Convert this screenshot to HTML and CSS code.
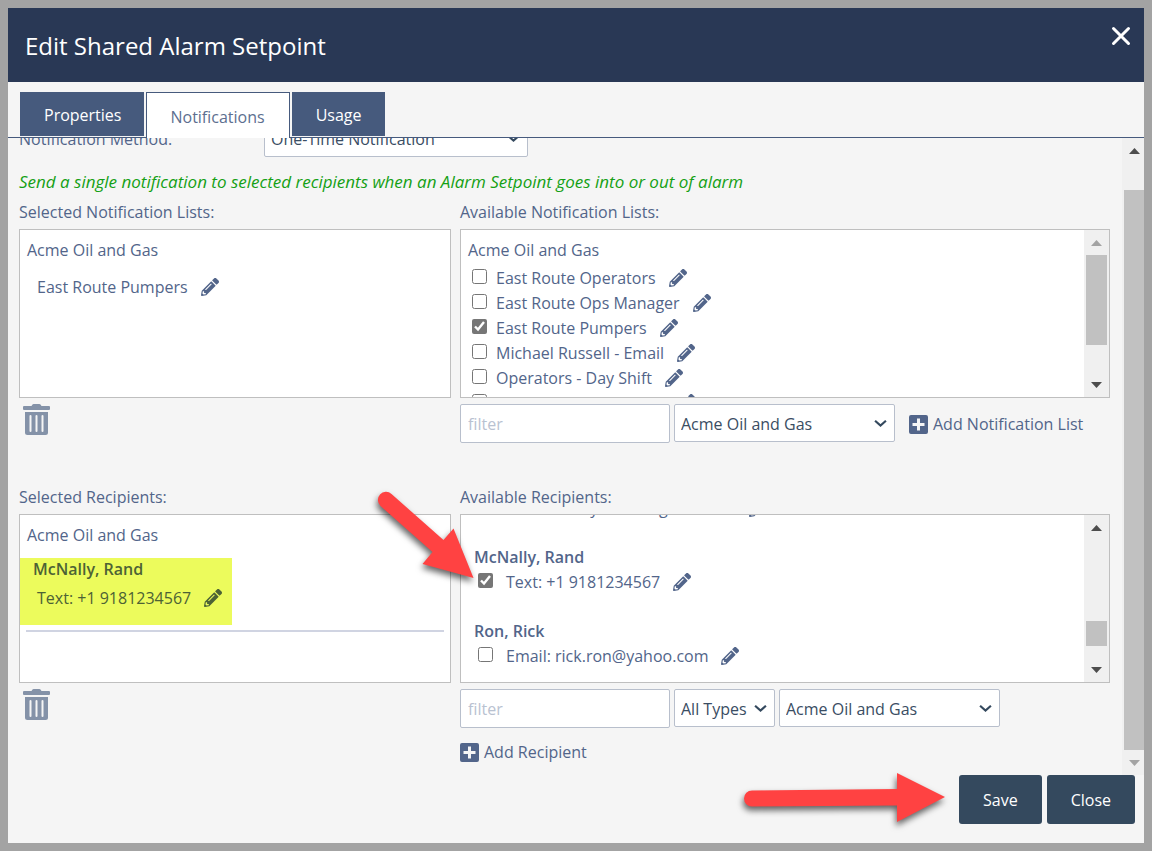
FILE: index.html
```html
<!DOCTYPE html>
<html lang="en">
<head>
<meta charset="utf-8">
<meta name="viewport" content="width=device-width, initial-scale=1">
<title>Edit Shared Alarm Setpoint</title>
<link rel="stylesheet" href="styles.css">
</head>
<body>
<svg class="sprite" aria-hidden="true">
  <symbol id="pencil" viewBox="0 0 512 512"><path d="M497.900 142.100l-46.100 46.100c-4.700 4.700-12.300 4.700-17 0l-111-111c-4.700-4.700-4.700-12.300 0-17l46.100-46.100c18.700-18.700 49.100-18.700 67.900 0l60.100 60.100c18.800 18.700 18.800 49.100 0 67.900zM284.200 99.800L21.600 362.400.400 483.900c-2.900 16.400 11.400 30.600 27.800 27.800l121.500-21.300 262.600-262.600c4.700-4.700 4.700-12.300 0-17l-111-111c-4.800-4.700-12.400-4.700-17.100 0zM124.100 339.900c-5.500-5.500-5.500-14.300 0-19.800l154-154c5.500-5.500 14.300-5.500 19.800 0s5.500 14.300 0 19.800l-154 154c-5.500 5.500-14.300 5.500-19.800 0zM88 424h48v36.300l-64.500 11.300-31.100-31.100L51.800 376H88v48z"/></symbol>
  <symbol id="trash" viewBox="0 0 27 32"><path fill-rule="evenodd" d="M1 2h7.500l.8-1.200Q9.800 0 10.700 0h5.600q.9 0 1.400.8l.8 1.200H26q1 0 1 1v2q0 1-1 1H1Q0 6 0 5V3q0-1 1-1zM2 8h23v20.500q0 2.500-2.500 2.500h-18Q2 31 2 28.500zM6.500 12v15q0 1 1 1t1-1V12q0-1-1-1t-1 1zM12.500 12v15q0 1 1 1t1-1V12q0-1-1-1t-1 1zM18.500 12v15q0 1 1 1t1-1V12q0-1-1-1t-1 1z"/></symbol>
  <symbol id="plus" viewBox="0 0 19 19"><path fill-rule="evenodd" d="M2 0h15q2 0 2 2v15q0 2-2 2H2q-2 0-2-2V2q0-2 2-2zM8 3.500V8H3.500v3H8v4.500h3V11h4.500V8H11V3.500z"/></symbol>
  <symbol id="chevron" viewBox="0 0 12 8"><path d="M1 1.500l5 4.500 5-4.500" fill="none" stroke="currentColor" stroke-width="2"/></symbol>
  <symbol id="up" viewBox="0 0 11 6"><path d="M5.500 0L11 6H0z"/></symbol>
  <symbol id="down" viewBox="0 0 11 6"><path d="M0 0h11L5.500 6z"/></symbol>
</svg>

<main class="dialog" role="dialog" aria-labelledby="title">
  <header class="dialog-header">
    <h1 class="dialog-title" id="title">Edit Shared Alarm Setpoint</h1>
    <button class="close-x" type="button" aria-label="Close dialog">
      <svg width="20" height="20" viewBox="0 0 20 20"><path d="M2.500 2.500l15 15M17.500 2.500l-15 15" fill="none" stroke="#fff" stroke-width="3" stroke-linecap="round"/></svg>
    </button>
  </header>

  <nav class="tabs" role="tablist">
    <button class="tab" type="button" role="tab">Properties</button>
    <button class="tab tab-active" type="button" role="tab" aria-selected="true">Notifications</button>
    <button class="tab" type="button" role="tab">Usage</button>
  </nav>

  <div class="pane">
    <div class="pane-content">
      <div class="method-row">
        <label for="method">Notification Method:</label>
        <span class="select select-method"><select id="method"><option>One-Time Notification</option></select><svg class="chevron"><use href="#chevron"/></svg></span>
      </div>
      <p class="hint">Send a single notification to selected recipients when an Alarm Setpoint goes into or out of alarm</p>

      <div class="columns">
        <section class="column">
          <h2 class="label">Selected Notification Lists:</h2>
          <div class="box">
            <div class="list">
              <div class="company">Acme Oil and Gas</div>
              <div class="chosen chosen-list">East Route Pumpers <button class="icon-button" type="button" aria-label="Edit"><svg class="pencil"><use href="#pencil"/></svg></button></div>
            </div>
          </div>
          <button class="trash" type="button" aria-label="Remove all lists"><svg width="27" height="32"><use href="#trash"/></svg></button>
        </section>
        <section class="column">
          <h2 class="label">Available Notification Lists:</h2>
          <div class="box">
            <div class="list">
              <div class="company">Acme Oil and Gas</div>
              <div class="item"><input type="checkbox" id="l1"><label for="l1">East Route Operators</label><button class="icon-button" type="button" aria-label="Edit"><svg class="pencil"><use href="#pencil"/></svg></button></div>
              <div class="item"><input type="checkbox" id="l2"><label for="l2">East Route Ops Manager</label><button class="icon-button" type="button" aria-label="Edit"><svg class="pencil"><use href="#pencil"/></svg></button></div>
              <div class="item"><input type="checkbox" id="l3" checked><label for="l3">East Route Pumpers</label><button class="icon-button" type="button" aria-label="Edit"><svg class="pencil"><use href="#pencil"/></svg></button></div>
              <div class="item"><input type="checkbox" id="l4"><label for="l4">Michael Russell - Email</label><button class="icon-button" type="button" aria-label="Edit"><svg class="pencil"><use href="#pencil"/></svg></button></div>
              <div class="item"><input type="checkbox" id="l5"><label for="l5">Operators - Day Shift</label><button class="icon-button" type="button" aria-label="Edit"><svg class="pencil"><use href="#pencil"/></svg></button></div>
              <div class="item"><input type="checkbox" id="l6"><label for="l6">Operators - Night Shift</label><button class="icon-button" type="button" aria-label="Edit"><svg class="pencil"><use href="#pencil"/></svg></button></div>
            </div>
            <div class="scrollbar" aria-hidden="true">
              <span class="step step-off"><svg><use href="#up"/></svg></span>
              <span class="thumb thumb-lists"></span>
              <span class="step step-end"><svg><use href="#down"/></svg></span>
            </div>
          </div>
          <div class="toolbar">
            <input class="filter" type="text" placeholder="filter" aria-label="Filter lists">
            <span class="select select-company"><select aria-label="Company"><option>Acme Oil and Gas</option></select><svg class="chevron"><use href="#chevron"/></svg></span>
            <button class="add add-list" type="button"><svg width="19" height="19"><use href="#plus"/></svg>Add Notification List</button>
          </div>
        </section>
      </div>

      <div class="columns columns-recipients">
        <section class="column">
          <h2 class="label">Selected Recipients:</h2>
          <div class="box">
            <div class="list">
              <div class="company">Acme Oil and Gas</div>
              <div class="highlight">
                <div class="chosen-name">McNally, Rand</div>
                <div class="chosen">Text: +1 9181234567 <button class="icon-button" type="button" aria-label="Edit"><svg class="pencil"><use href="#pencil"/></svg></button></div>
              </div>
              <hr class="divider">
            </div>
          </div>
          <button class="trash" type="button" aria-label="Remove all recipients"><svg width="27" height="32"><use href="#trash"/></svg></button>
        </section>
        <section class="column">
          <h2 class="label">Available Recipients:</h2>
          <div class="box">
            <div class="list list-scrolled">
              <div class="person">
                <div class="item"><input type="checkbox" id="r1"><label for="r1">Email: henry.nolan@gmail.com</label><button class="icon-button" type="button" aria-label="Edit"><svg class="pencil"><use href="#pencil"/></svg></button></div>
              </div>
              <div class="person">
                <div class="person-name">McNally, Rand</div>
                <div class="item"><input type="checkbox" id="r2" checked><label for="r2">Text: +1 9181234567</label><button class="icon-button" type="button" aria-label="Edit"><svg class="pencil"><use href="#pencil"/></svg></button></div>
              </div>
              <div class="person">
                <div class="person-name">Ron, Rick</div>
                <div class="item"><input type="checkbox" id="r3"><label for="r3">Email: rick.ron@yahoo.com</label><button class="icon-button" type="button" aria-label="Edit"><svg class="pencil"><use href="#pencil"/></svg></button></div>
              </div>
            </div>
            <div class="scrollbar" aria-hidden="true">
              <span class="step"><svg><use href="#up"/></svg></span>
              <span class="thumb thumb-recipients"></span>
              <span class="step"><svg><use href="#down"/></svg></span>
            </div>
          </div>
          <div class="toolbar">
            <input class="filter" type="text" placeholder="filter" aria-label="Filter recipients">
            <span class="select select-types"><select aria-label="Recipient type"><option>All Types</option></select><svg class="chevron"><use href="#chevron"/></svg></span>
            <span class="select select-company"><select aria-label="Company"><option>Acme Oil and Gas</option></select><svg class="chevron"><use href="#chevron"/></svg></span>
          </div>
          <button class="add add-recipient" type="button"><svg width="19" height="19"><use href="#plus"/></svg>Add Recipient</button>
          <svg class="pointer pointer-check" width="110" height="100" viewBox="376 488 110 100" aria-hidden="true"><path d="M391.500 494L443.500 540l10-11.500 20 49.500-51-14 10-12L380.500 506a8 8 0 0 1 11-12z"/></svg>
        </section>
      </div>
    </div>
    <div class="scrollbar scrollbar-pane" aria-hidden="true">
      <span class="step"><svg><use href="#up"/></svg></span>
      <span class="thumb thumb-pane"></span>
      <span class="step step-off"><svg><use href="#down"/></svg></span>
    </div>
  </div>

  <footer class="actions">
    <svg class="pointer pointer-save" width="214" height="64" viewBox="740 768 214 64" aria-hidden="true"><path d="M752 790.500L897 789v-16l48 24-48 25v-16.500l-145 1a8 8 0 0 1 0-16z"/></svg>
    <button class="action" type="button">Save</button>
    <button class="action" type="button">Close</button>
  </footer>
</main>
</body>
</html>
```
FILE: styles.css
```css
* { box-sizing: border-box; }

body {
  margin: 0;
  padding: 8px;
  min-height: 100vh;
  display: flex;
  background: #a3a3a3;
  color: #52658a;
  font: 16px/24px "Open Sans", "Noto Sans", sans-serif;
}

button, input, select { font: inherit; color: inherit; }
button { border: 0; padding: 0; background: none; cursor: pointer; }
svg { display: block; fill: currentColor; }
.sprite { position: absolute; width: 0; height: 0; }

.dialog {
  flex: 1;
  min-width: 0;
  display: flex;
  flex-direction: column;
  background: #f5f5f5;
}

.dialog-header {
  display: flex;
  justify-content: space-between;
  align-items: flex-start;
  padding: 18px 13px 16px 17px;
  background: #293855;
  color: #fff;
}
.dialog-title { margin: 0; font-size: 24px; line-height: 40px; font-weight: 400; }

.tabs {
  display: flex;
  gap: 2px;
  padding: 10px 12px 0;
  border-bottom: 1px solid #465a7d;
}
.tab {
  padding: 2px 23px 0 24px;
  height: 44px;
  background: #465a7d;
  color: #fff;
}
.tab-active {
  height: 46px;
  padding: 2px 24px 0 23px;
  margin-bottom: -1px;
  border: 1px solid #465a7d;
  border-bottom: 0;
  background: #fff;
  color: #5d6f90;
}

.pane { flex: 1; display: flex; overflow: hidden; }
.pane-content { flex: 1; min-width: 0; margin-top: -19px; padding: 0 12px 11px 11px; }

.method-row { display: flex; align-items: center; }
.method-row label { width: 245px; padding-top: 2px; }
.hint { margin: 13px 0 6px; color: #14a014; font-size: 17px; font-style: italic; }

.columns { display: grid; grid-template-columns: 432fr 650fr; gap: 9px; }
.columns-recipients { margin-top: 42px; }
.column { position: relative; min-width: 0; }
.label { margin: 0 0 5px; font-size: 16px; line-height: 24px; font-weight: 400; }

.box {
  display: flex;
  height: 169px;
  border: 1px solid #bfbfbf;
  background: #fff;
  overflow: hidden;
}
.list { flex: 1; padding-top: 6px; }
.list-scrolled {
  display: flex;
  flex-direction: column;
  justify-content: flex-end;
  padding: 0 0 14px 6px;
}
.company { padding-left: 7px; line-height: 29px; }

.item { display: flex; align-items: center; height: 25px; padding-left: 11px; }
.item input { width: 15px; height: 15px; margin: 0 9px 2px 0; accent-color: #767676; }
.person .item input { margin-right: 13px; }
.item .icon-button { margin-left: 13px; }
.pencil { width: 18px; height: 18px; }

.person + .person { margin-top: 25px; }
.person-name { padding-left: 7px; font-weight: 600; }

.chosen { display: flex; align-items: center; gap: 13px; height: 36px; padding-left: 17px; }
.chosen-list { margin-top: 4px; }
.highlight { width: 212px; margin-top: 8px; padding-bottom: 9px; background: #ecfb5c; color: #4c6235; }
.chosen-name { padding-left: 13px; line-height: 22px; font-weight: 600; }
.divider { height: 2px; margin: 5px 6px 0; border: 0; background: #d0d4e2; }

.trash { display: block; margin: 6px 0 0 4px; color: #8492a8; }

.toolbar { display: flex; align-items: flex-start; gap: 4px; margin-top: 6px; }
.filter {
  flex: 0 1 210px;
  min-width: 0;
  height: 39px;
  padding: 0 7px;
  border: 1px solid #b8bfcc;
  border-radius: 2px;
  background: #fff;
}
.filter::placeholder { color: #b9c2d1; opacity: 1; }

.select { position: relative; display: block; height: 38px; }
.select select {
  appearance: none;
  width: 100%;
  height: 100%;
  padding: 2px 6px 0;
  border: 1px solid #b8bfcc;
  border-radius: 2px;
  background: #fff;
  color: #3a4d63;
}
.chevron {
  position: absolute;
  right: 8px;
  top: 15px;
  width: 13px;
  height: 9px;
  color: #34495e;
  pointer-events: none;
}
.select-method { width: 264px; }
.select-company { width: 221px; }
.select-types { width: 101px; }

.add { display: flex; align-items: center; gap: 5px; height: 24px; white-space: nowrap; }
.add svg { color: #52658a; }
.add-list { margin: 8px 0 0 10px; }
.add-recipient { margin-top: 12px; }

.scrollbar {
  flex: none;
  display: flex;
  flex-direction: column;
  width: 25px;
  padding: 0 2px;
  background: #f0f0f0;
  color: #4d4d4d;
}
.scrollbar-pane { width: 22px; padding: 0 0 0 2px; }
.step { flex: none; display: flex; justify-content: center; align-items: center; height: 25px; }
.step svg { width: 11px; height: 6px; }
.step-off { color: #a3a3a3; }
.step-end { margin-top: auto; }
.thumb { background: #c1c1c1; }
.thumb-lists { height: 90px; }
.thumb-recipients { height: 25px; margin: auto 0 11px; }
.thumb-pane { flex: 1; margin-top: 27px; }

.actions {
  position: relative;
  display: flex;
  justify-content: flex-end;
  gap: 5px;
  padding: 0 9px 19px;
}
.action {
  height: 49px;
  padding: 0 24px;
  border-radius: 3px;
  background: #34495e;
  color: #fff;
}

.pointer { position: absolute; color: #ff4242; filter: drop-shadow(-1px 4px 3px rgba(0, 0, 0, 0.6)); pointer-events: none; }
.pointer-check { left: -84px; top: 3px; }
.pointer-save { right: 190px; top: -7px; }
```
